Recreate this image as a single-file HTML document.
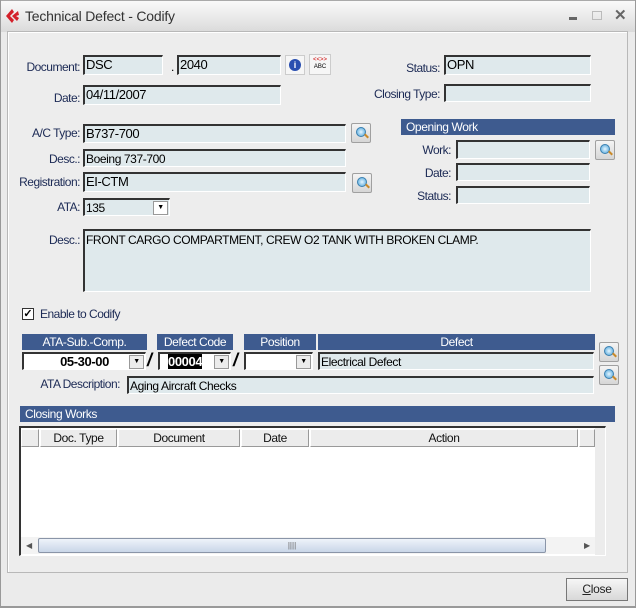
<!DOCTYPE html>
<html><head><meta charset="utf-8"><style>
*{box-sizing:border-box;margin:0;padding:0}
body{width:636px;height:608px;overflow:hidden;background:#ebebeb;font-family:"Liberation Sans",sans-serif;font-size:12px;position:relative}
.a{position:absolute}
.lbl{position:absolute;color:#1c2a55;font-size:12px;letter-spacing:-0.5px;text-align:right;white-space:nowrap}
.f{position:absolute;background:#dfe9ec;border-top:2px solid #333;border-left:2px solid #333;border-right:1px solid #fff;border-bottom:1px solid #fff;font-size:13px;letter-spacing:-0.4px;padding-left:1px;line-height:16px;color:#000;white-space:nowrap;overflow:hidden}
.hdr{position:absolute;background:#3e5b8f;color:#fff;font-size:12px;letter-spacing:-0.4px;text-align:center;line-height:16px}
.btn{position:absolute;width:20px;height:20px;border:1px solid #a0a0a0;background:linear-gradient(#f4f4f4,#d6d6d6);border-radius:2px}
.btn::before{content:"";position:absolute;left:4px;top:3px;width:8px;height:8px;border-radius:50%;background:radial-gradient(#e6f6ff,#4aa3d9);border:1px solid #3a7fb0}
.btn::after{content:"";position:absolute;left:12px;top:11px;width:5px;height:2px;background:#c98a2a;transform:rotate(45deg)}
.cb{position:absolute;background:#fff;border-top:2px solid #333;border-left:2px solid #333;border-right:1px solid #fff;border-bottom:1px solid #fff;font-size:13px;font-weight:bold;text-align:center;line-height:15px;letter-spacing:-0.4px}
.dd{position:absolute;top:1px;right:1px;width:15px;height:14px;background:#ececec;border:1px solid #999;font-size:7px;text-align:center;line-height:12px;font-weight:normal}
.gh{position:absolute;top:429px;height:18px;background:#ececec;border:1px solid #999;border-top-color:#fff;border-left-color:#fff;font-size:12px;text-align:center;line-height:16px;letter-spacing:-0.4px;color:#111}
</style></head><body>
<!-- title bar -->
<div class="a" style="left:0;top:0;width:636px;height:32px;background:linear-gradient(#fafafa,#dadada);border:1px solid #aaa;border-bottom:none"></div>
<svg class="a" style="left:4px;top:8px" width="16" height="16"><path d="M2 8 L8 1 L10 4 L6 8 L10 12 L8 15Z M8 8 L14 3 L15 7 L12 8 L15 10 L13 13Z" fill="#d4202a"/></svg>
<div class="a" style="left:25px;top:8px;font-size:14px;color:#333;letter-spacing:-0.2px">Technical Defect - Codify</div>
<div class="a" style="left:569px;top:17px;width:8px;height:3px;background:#666"></div>
<div class="a" style="left:592px;top:11px;width:10px;height:9px;border:1px solid #bbb"></div>
<div class="a" style="left:614px;top:6px;font-size:15px;color:#666;font-weight:bold">✕</div>
<!-- panel -->
<div class="a" style="left:7px;top:31px;width:621px;height:542px;border:1px solid #b8b8b8;background:#ededed;box-shadow:inset 1px 1px #fff"></div>

<div class="lbl" style="right:556px;top:60px">Document:</div>
<div class="f" style="left:83px;top:55px;width:80px;height:20px">DSC</div>
<div class="a" style="left:171px;top:60px">.</div>
<div class="f" style="left:177px;top:55px;width:104px;height:20px">2040</div>
<div class="a" style="left:285px;top:55px;width:20px;height:20px;border:1px solid #ccc;background:#f6f6f6"><div style="margin:3px;width:12px;height:12px;border-radius:50%;background:#2a4fb0;color:#fff;font-size:9px;font-weight:bold;text-align:center;line-height:12px">i</div></div>
<div class="a" style="left:309px;top:54px;width:22px;height:21px;border:1px solid #ccc;background:#f6f6f6;font-size:6px;text-align:center;line-height:7px;padding-top:2px"><span style="color:#c00">&lt;&lt;&gt;&gt;</span><br>ABC</div>
<div class="lbl" style="right:556px;top:91px">Date:</div>
<div class="f" style="left:83px;top:85px;width:198px;height:20px">04/11/2007</div>

<div class="lbl" style="right:196px;top:61px">Status:</div>
<div class="f" style="left:444px;top:55px;width:147px;height:20px">OPN</div>
<div class="lbl" style="right:196px;top:87px">Closing Type:</div>
<div class="f" style="left:444px;top:84px;width:147px;height:18px"></div>

<div class="lbl" style="right:556px;top:126px">A/C Type:</div>
<div class="f" style="left:83px;top:124px;width:263px;height:19px">B737-700</div>
<div class="btn" style="left:351px;top:123px"></div>
<div class="lbl" style="right:556px;top:152px">Desc.:</div>
<div class="f" style="left:83px;top:149px;width:263px;height:18px;font-size:12px">Boeing 737-700</div>
<div class="lbl" style="right:556px;top:175px">Registration:</div>
<div class="f" style="left:83px;top:172px;width:263px;height:20px">EI-CTM</div>
<div class="btn" style="left:352px;top:173px"></div>
<div class="lbl" style="right:556px;top:200px">ATA:</div>
<div class="f" style="left:83px;top:198px;width:87px;height:18px;font-size:12px">135<div class="dd" style="background:#fff;color:#000">▼</div></div>

<div class="hdr" style="left:401px;top:119px;width:214px;text-align:left;padding-left:5px">Opening Work</div>
<div class="lbl" style="right:185px;top:143px">Work:</div>
<div class="f" style="left:456px;top:140px;width:134px;height:19px"></div>
<div class="btn" style="left:595px;top:140px"></div>
<div class="lbl" style="right:185px;top:166px">Date:</div>
<div class="f" style="left:456px;top:163px;width:134px;height:18px"></div>
<div class="lbl" style="right:185px;top:189px">Status:</div>
<div class="f" style="left:456px;top:186px;width:134px;height:18px"></div>

<div class="lbl" style="right:556px;top:233px">Desc.:</div>
<div class="f" style="left:83px;top:229px;width:508px;height:63px;font-size:12px;padding-top:1px">FRONT CARGO COMPARTMENT, CREW O2 TANK WITH BROKEN CLAMP.</div>

<div class="a" style="left:22px;top:308px;width:12px;height:12px;border:1px solid #333;background:#fff;font-size:11px;line-height:10px;text-align:center;font-weight:bold">✓</div>
<div class="a" style="left:40px;top:307px;color:#1c2a55;letter-spacing:-0.5px">Enable to Codify</div>

<div class="hdr" style="left:22px;top:334px;width:125px">ATA-Sub.-Comp.</div>
<div class="hdr" style="left:157px;top:334px;width:76px">Defect Code</div>
<div class="hdr" style="left:244px;top:334px;width:72px">Position</div>
<div class="hdr" style="left:318px;top:334px;width:277px">Defect</div>
<div class="cb" style="left:22px;top:352px;width:124px;height:18px">05-30-00<div class="dd">▼</div></div>
<div class="a" style="left:147px;top:350px;font-size:18px;font-weight:bold;font-style:italic">/</div>
<div class="cb" style="left:158px;top:352px;width:73px;height:18px;text-align:left;padding-left:8px"><span style="background:#000;color:#fff">00004</span><div class="dd">▼</div></div>
<div class="a" style="left:233px;top:350px;font-size:18px;font-weight:bold;font-style:italic">/</div>
<div class="cb" style="left:244px;top:352px;width:69px;height:18px"><div class="dd">▼</div></div>
<div class="f" style="left:318px;top:352px;width:276px;height:18px;font-size:12px">Electrical Defect</div>
<div class="btn" style="left:599px;top:342px"></div>
<div class="btn" style="left:599px;top:365px"></div>
<div class="lbl" style="right:516px;top:377px">ATA Description:</div>
<div class="f" style="left:127px;top:376px;width:467px;height:18px;font-size:12px">Aging Aircraft Checks</div>

<div class="hdr" style="left:20px;top:406px;width:595px;text-align:left;padding-left:5px">Closing Works</div>
<div class="a" style="left:19px;top:426px;width:587px;height:130px;border-top:2px solid #333;border-left:2px solid #333;border-right:1px solid #fff;border-bottom:1px solid #fff;background:#fff"></div>
<div class="a" style="left:595px;top:428px;width:10px;height:127px;background:#ececec"></div>
<div class="gh" style="left:21px;width:18px"></div>
<div class="gh" style="left:40px;width:77px">Doc. Type</div>
<div class="gh" style="left:118px;width:122px">Document</div>
<div class="gh" style="left:241px;width:68px">Date</div>
<div class="gh" style="left:310px;width:268px">Action</div>
<div class="gh" style="left:579px;width:16px"></div>
<div class="a" style="left:21px;top:537px;width:574px;height:17px;background:#f3f3f3"></div>
<div class="a" style="left:26px;top:541px;font-size:8px;color:#555">◀</div>
<div class="a" style="left:584px;top:541px;font-size:8px;color:#555">▶</div>
<div class="a" style="left:38px;top:538px;width:508px;height:15px;border:1px solid #8a95a8;border-radius:2px;background:linear-gradient(#eef3fa,#c9d6e8);font-size:8px;text-align:center;color:#666;line-height:13px">||||</div>

<div class="a" style="left:566px;top:578px;width:62px;height:23px;border:1px solid #777;background:linear-gradient(#f6f6f6,#d8d8d8);text-align:center;line-height:21px;color:#222;letter-spacing:-0.3px"><u>C</u>lose</div>
<div class="a" style="left:0;top:606px;width:636px;height:2px;background:#999"></div>
<div class="a" style="left:0;top:0;width:1px;height:608px;background:#999"></div>
<div class="a" style="left:635px;top:0;width:1px;height:608px;background:#999"></div>
</body></html>
